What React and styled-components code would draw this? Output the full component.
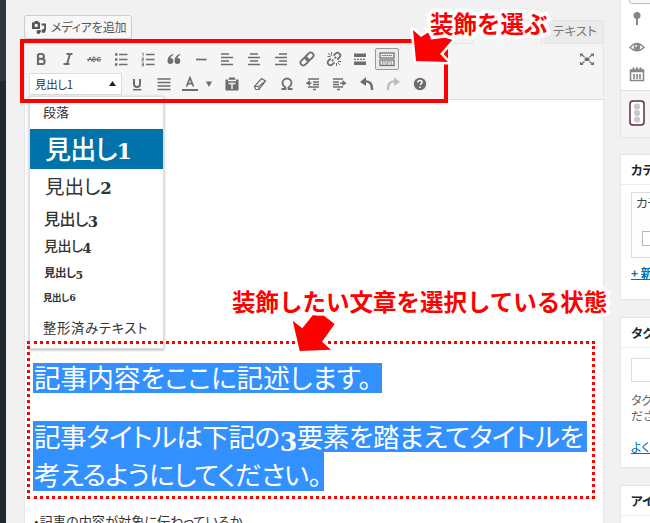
import React from "react";
import styled, { createGlobalStyle, css } from "styled-components";

const Global = createGlobalStyle`
  * { box-sizing: border-box; }
  body { margin: 0; overflow: hidden; }
`;
const jp = `"Noto Sans CJK JP", sans-serif`;

const Page = styled.div`
  position: relative; width: 650px; height: 523px; overflow: hidden;
  display: flex; background: #f1f1f1; color: #444;
  font: 13px/16px ${jp}; white-space: nowrap;
`;
const AdminMenu = styled.div`
  width: 6px; flex: none;
  background: linear-gradient(#32373c 81px, #23282d 81px);
`;
const Main = styled.main`
  width: 580px; margin-left: 18px; flex: none; display: flex; flex-direction: column;
`;
const TabBar = styled.div`
  height: 43px; flex: none; display: flex; align-items: flex-end;
`;
const MediaButton = styled.div`
  width: 108px; height: 24px; margin-bottom: 4px; padding-left: 6px;
  display: flex; align-items: center; gap: 4px;
  border: 1px solid #ccc; border-radius: 3px; background: #f7f7f7;
  box-shadow: 0 1px 0 #d5d5d5; color: #555; font-size: 12px;
  font-feature-settings: "palt"; letter-spacing: -0.15px;
`;
const Tab = styled.div`
  height: ${p => (p.$on ? 24 : 23)}px; width: ${p => p.w}px; margin-left: ${p => p.gap}px; padding: 2px 0 0 7px;
  border: 1px solid #e5e5e5; border-bottom: 0; color: #777; font-size: 12.5px;
  background: ${p => (p.$on ? "#f5f5f5" : "#ebebeb")};
  ${p => p.$on && css`margin-bottom: -1px; z-index: 1;`}
  font-feature-settings: "palt"; letter-spacing: 0.05px;
`;
const Editor = styled.section`
  height: 480px; border: 1px solid #e5e5e5; border-bottom: 0; background: #fff;
`;
const Toolbar = styled.div`
  height: 56px; background: #f5f5f5; border-bottom: 1px solid #ddd;
  padding: 2px 3px 0;
`;
const ToolRow = styled.div`
  display: grid; height: 25px; align-items: center; justify-items: center;
  grid-template-columns: ${p => p.$cols};
`;
const Tool = styled.div`
  width: 24px; height: 22px; display: grid; place-items: center; color: #6d6d6d;
  opacity: ${p => (p.$off ? 0.4 : 1)};
  ${p => p.$on && css`border: 1px solid #999; border-radius: 2px; background: #ebebeb;`}
`;
const Select = styled.div`
  width: 93px; height: 22px; justify-self: start; padding: 0 5px; margin-left: 1px;
  display: flex; align-items: center; justify-content: space-between;
  border: 1px solid #ddd; background: #fff; color: #333; font-size: 11.5px;
  font-feature-settings: "palt"; letter-spacing: -0.3px;
`;
const Content = styled.article`padding: 263px 0 0 8px;`;
const Line = styled.div`
  width: ${p => p.w}px; height: ${p => p.h}px; margin-bottom: ${p => p.gap || 0}px;
  padding-left: 1px; background: #3390ff; color: #fff;
  font-size: 26.6px; line-height: ${p => p.lh}px; font-weight: 400;
  font-feature-settings: "palt"; letter-spacing: ${p => p.ls}px;
`;
const Digit = styled.span`
  font-family: "DejaVu Serif", serif; font-weight: 700; vertical-align: ${p => p.$drop || 0}px;
  font-size: ${p => p.$em || 0.85}em; line-height: 0; letter-spacing: -0.5px;
`;
const Note = styled.p`
  margin: 21px 0 0 0; font-size: 13.2px; line-height: 20px; color: #333;
  font-feature-settings: "palt"; letter-spacing: 0;
`;

const Menu = styled.div`
  position: absolute; left: 29px; top: 96px; width: 135px; height: 253px;
  border: 1px solid #ddd; background: #fff; box-shadow: 0 1px 3px rgba(0,0,0,.3);
`;
const Item = styled.div`
  height: ${p => p.h}px; line-height: ${p => p.h - 2}px; padding-left: ${p => p.pad || 13}px;
  font-size: ${p => p.size}px; font-weight: ${p => p.weight || 400};
  color: ${p => (p.$on ? "#fff" : "#333")}; background: ${p => (p.$on ? "#0073aa" : "#fff")};
  font-feature-settings: "palt"; letter-spacing: ${p => p.ls || 0}px;
`;

const Side = styled.aside`
  width: 30px; margin-left: 16px; flex: none; overflow: hidden;
  font-feature-settings: "palt";
`;
const Box = styled.div`
  height: ${p => p.h}px; width: 280px; margin-bottom: 17px;
  border: 1px solid #e5e5e5; background: #fff; font-size: 12.5px;
`;
const PublishBox = styled(Box)`height: 138px; border-top: 0; margin-bottom: 16px;`;
const Status = styled.div`
  height: 91px; border-bottom: 1px solid #ddd; padding: 0 0 5px 8px; color: #82878c;
  display: grid; grid-template-rows: 5px 28px 28px 25px; align-items: center;
`;
const StubButton = styled.div`
  width: 80px; height: 8px; margin: -5px 0 0 0; border: 1px solid #bbb; border-radius: 3px; background: #f7f7f7;
`;
const Actions = styled.div`height: 46px; background: #f5f5f5; padding: 9px 0 0 8px;`;
const Head = styled.h2`
  margin: 0; height: 30px; padding-left: 10px; border-bottom: 1px solid #eee;
  font-size: 12.5px; line-height: 29px; font-weight: 700; color: #23282d;
`;
const CatPanel = styled.div`
  margin: 7px 0 0 10px; height: 66px; border: 1px solid #ddd; background: #fdfdfd; padding: 2px 0 0 4px;
`;
const Check = styled.div`width: 15px; height: 15px; margin: 20px 0 0 6px; border: 1px solid #b4b9be; background: #fff;`;
const Link = styled.div`
  margin: ${p => p.top}px 0 0 10px; color: #0073aa; text-decoration: underline; font-weight: ${p => p.weight || 400};
  font-size: 12px; line-height: 18px;
`;
const TagInput = styled.div`margin: 10px 0 0 10px; height: 24px; border: 1px solid #ddd;`;
const Hint = styled.div`margin: 10px 0 0 10px; line-height: 16px; color: #666; font-size: 12px;`;

const RedFrame = styled.div`
  position: absolute; z-index: 2; left: 20px; top: 39px; width: 428px; height: 64px; border: 4px solid #f00;
`;
const DottedFrame = styled.div`
  position: absolute; z-index: 2; left: 27px; top: 341px; width: 568px; height: 158px; border: 3px dotted #f00;
`;
const Callout = styled.div`
  position: absolute; z-index: 2; left: ${p => p.x}px; top: ${p => p.y}px;
  color: #f00; font-size: 23.5px; line-height: 28px; font-weight: 700;
  -webkit-text-stroke: 7px #fff; paint-order: stroke fill; stroke-linejoin: round;
`;
const Arrows = styled.svg`position: absolute; z-index: 2; left: 0; top: 0;`;

const Svg = ({ children, size = 16, w, ...p }) => (
  <svg width={w || size} height={size} viewBox={`0 0 ${w || size} ${size}`} fill="none" stroke="currentColor" strokeWidth="1.5" {...p}>
    {children}
  </svg>
);
const Bars = ({ d }) => <Svg><path d={d} strokeWidth="1.7" /></Svg>;
const icons = {
  bold: <Svg><path d="M5 3v10h4a2.6 2.6 0 000-5.2H5M5 3h3.5a2.4 2.4 0 010 4.8" strokeWidth="2.2" /></Svg>,
  italic: <Svg><path d="M6.500 3h6M3.500 13h6M10 3L7 13" strokeWidth="2" /></Svg>,
  strike: <Svg><path d="M2 10.500L4 6l2 4.500M7 6h1.500q1.500 1 0 2.200q2 1 0 2.300H7zM14.500 6.500q-3.500-1-3.500 1.800t3.500 1.700" strokeWidth="1" /><path d="M1 8.500h14" strokeWidth="1.200" /></Svg>,
  ul: <Svg><path d="M6 3.500h8.500M6 8.500h8.500M6 13.500h8.500" strokeWidth="1.300" /><path d="M2 3.500h2.400M2 8.500h2.400M2 13.500h2.400" strokeWidth="2.400" /></Svg>,
  ol: <Svg><path d="M6 3.500h8.500M6 8.500h8.500M6 13.500h8.500" strokeWidth="1.300" /><path d="M2 2h1.200v3.500M1.500 7h2v1.500h-1.500v1.500h2M1.500 12h2v3h-2m0-1.500h2" strokeWidth=".8" /></Svg>,
  quote: <Svg><g fill="currentColor" stroke="none"><path d="M7 3C3.500 4 1.500 6.500 1.500 10a2.900 2.900 0 102.900-2.900C4.700 5.700 6 4.700 7.400 4zM14 3C10.500 4 8.500 6.500 8.500 10a2.900 2.900 0 102.900-2.900c.3-1.400 1.600-2.400 3-3.100z" /></g></Svg>,
  hr: <Svg><path d="M3 8.500h10.500" strokeWidth="1.700" /></Svg>,
  left: <Bars d="M2 3h8M2 6.500h12M2 10h8M2 13.500h12" />,
  center: <Bars d="M4 3h8M2 6.500h12M4 10h8M2 13.500h12" />,
  right: <Bars d="M6 3h8M2 6.500h12M6 10h8M2 13.500h12" />,
  justify: <Bars d="M1.500 3h13M1.500 6.500h13M1.500 10h13M1.500 13.500h13" />,
  link: <Svg><g transform="rotate(-45 8 8)" strokeWidth="1.800"><rect x="0" y="5.200" width="9" height="5.600" rx="2.800" /><rect x="7" y="5.200" width="9" height="5.600" rx="2.800" /></g></Svg>,
  unlink: <Svg><g transform="rotate(-45 8 8)" strokeWidth="1.800"><path d="M6 5.300H3a2.700 2.700 0 000 5.400h3M10 5.300h3a2.700 2.700 0 010 5.400h-3M5 8h2M9 8h2" /></g><path d="M5.500 1v3.500M1.500 5.500h3M10.500 12v3M12 10.500h3M2 2l2.500 2.500M11.500 11.500l2.500 2.500" strokeWidth="1" /></Svg>,
  more: <Svg><path d="M2 4.300h12M2 12.300h12" strokeWidth="3.600" /><path d="M2 8.300h12" strokeDasharray="2 1" strokeWidth="1.300" /></Svg>,
  sink: <Svg><rect x="1" y="2" width="14" height="5" strokeWidth="1.200" /><rect x="1" y="9" width="14" height="5.500" strokeWidth="1.200" /><path d="M3 4.500h10M3 11h10M3 13h1.500M6 13h4M11.500 13h1.500" strokeDasharray="1.500 .7" strokeWidth="1.200" /></Svg>,
  full: <Svg><rect x="5.700" y="6.500" width="4.600" height="3.500" fill="currentColor" stroke="none" /><path d="M2.500 3.500l3 2.500M13.500 3.500l-3 2.500M2.500 13l3-2.500M13.500 13l-3-2.500" strokeWidth="1.200" /><path d="M1 6V2.500h3.500zM15 6V2.500h-3.500zM1 10.500V14h3.500zM15 10.500V14h-3.500z" fill="currentColor" stroke="none" /></Svg>,
  underline: <Svg><path d="M5 3v5q0 3 3 3t3-3V3" strokeWidth="2" /><path d="M4 13.700h8.500" strokeWidth="1.500" /></Svg>,
  color: <Svg w={18}><path d="M5.500 10.500L9 1.800l3.500 8.700M6.500 7.700h5" strokeWidth="1.700" /><path d="M1 14h16" strokeWidth="2" /></Svg>,
  caret: <Svg size={8}><path d="M1 1.500h6L4 7z" fill="currentColor" stroke="none" /></Svg>,
  paste: <Svg><path d="M1.500 3.500H5V1.500h6v2h3.500v11h-13z" fill="currentColor" stroke="none" /><path d="M4 4.500h8M4.500 7.500h7M8 7.500v5.500" stroke="#f5f5f5" strokeWidth="1.500" /></Svg>,
  eraser: <Svg><path d="M2.500 10.500L9.500 2.500l4 2.500-6.500 8.500H3.800zM2.500 10.500h4.300l.2 3M6.800 10.500L13.500 5" strokeWidth="1.200" /></Svg>,
  omega: <Svg><path d="M2.500 13h4v-1.500Q3.500 9.500 3.500 7a4.500 4.500 0 019 0q0 2.500-3 4.500V13h4" strokeWidth="1.800" /></Svg>,
  outdent: <Svg><path d="M3 3h11M8 6h6M8 8.500h6M3 11h11M8 13.500h3" strokeWidth="1.500" /><path d="M1.500 7.200h5" /><path d="M5 4L1 7.200 5 10z" fill="currentColor" stroke="none" /></Svg>,
  indent: <Svg><path d="M1 3h10M1 6h6M1 8.500h6M1 11h10M5 13.500h3" strokeWidth="1.500" /><path d="M8 7.200h4" /><path d="M10.500 4l4 3.200-4 2.800z" fill="currentColor" stroke="none" /></Svg>,
  undo: <Svg><path d="M5 5.500c5-1 8.500 2 8 8.500" strokeWidth="2.300" /><path d="M1 6l6-5v9z" fill="currentColor" stroke="none" /></Svg>,
  redo: <Svg><path d="M11 5.500C6 4.500 2.500 7.500 3 14" strokeWidth="2.300" /><path d="M15 6L9 1v9z" fill="currentColor" stroke="none" /></Svg>,
  help: <Svg><circle cx="8" cy="8" r="6.200" fill="currentColor" stroke="none" /><path d="M5.900 6.500q0-2 2.100-2t2.100 1.800Q10.100 7.500 8 8.700M8 10.500v1.500" stroke="#fff" strokeWidth="1.500" /></Svg>,
};
const first = ["bold", "italic", "strike", "ul", "ol", "quote", "hr", "left", "center", "right", "link", "unlink", "more", "sink"];
const second = ["paste", "eraser", "omega", "outdent", "indent", "undo", "redo", "help"];

export default function App() {
  return (
    <Page>
      <Global />
      <AdminMenu />
      <Main>
        <TabBar>
          <MediaButton>
            <Svg>
              <path d="M1 3.500h2L4 2h3l1 1.500h1V10H1z" fill="currentColor" stroke="none" />
              <circle cx="5.200" cy="6.500" r="1.700" fill="#f7f7f7" stroke="none" />
              <path d="M10.500 5.500h3.500v6" strokeWidth="1.800" /><circle cx="12.500" cy="12" r="2" fill="currentColor" stroke="none" /><circle cx="7.500" cy="13" r="2" fill="currentColor" stroke="none" /><path d="M9 13V11" />
            </Svg>
            メディアを追加
          </MediaButton>
          <Tab w={69} gap={341} $on />
          <Tab w={59} gap={3}>テキスト</Tab>
        </TabBar>
        <Editor>
          <Toolbar>
            <ToolRow $cols="repeat(14, 26.6px) 1fr 26px">
              {first.map(n => <Tool key={n} $on={n === "sink"}>{icons[n]}</Tool>)}
              <span />
              <Tool>{icons.full}</Tool>
            </ToolRow>
            <ToolRow $cols="95px 27px 27px 25px 14px 31px repeat(7, 26.6px)">
              <Select>見出し1<Svg size={7}><path d="M0 6h7L3.500 1z" fill="#222" stroke="none" /></Svg></Select>
              <Tool>{icons.underline}</Tool>
              <Tool>{icons.justify}</Tool>
              <Tool>{icons.color}</Tool>
              <Tool>{icons.caret}</Tool>
              {second.map(n => <Tool key={n} $off={n === "redo"}>{icons[n]}</Tool>)}
            </ToolRow>
          </Toolbar>
          <Content>
            <Line w={349} h={30} lh={28} gap={28} ls={0}>記事内容をここに記述します。</Line>
            <Line w={554} h={31} lh={30} ls={-0.5}>記事タイトルは下記の<Digit $em={0.95} $drop={-4}>3</Digit>要素を踏まえてタイトルを</Line>
            <Line w={291} h={39} lh={43} ls={-0.8}>考えるようにしてください。</Line>
            <Note>・記事の内容が対象に伝わっているか</Note>
          </Content>
        </Editor>
      </Main>
      <Side>
        <PublishBox>
          <Status>
            <StubButton />
            <Svg><circle cx="8" cy="4.500" r="3.500" fill="currentColor" stroke="none" /><path d="M8 7v7" strokeWidth="2" /></Svg>
            <Svg><path d="M1 8.500Q8 .5 15 8.500 8 15 1 8.500z" /><circle cx="8" cy="8" r="3.200" fill="currentColor" stroke="none" /><circle cx="7" cy="7" r="1" fill="#fff" stroke="none" /></Svg>
            <Svg><path d="M1.500 4h13v10.500h-13zM2 5.500h12" /><path d="M4.500 1.500v3M8 1.500v3M11.500 1.500v3" strokeWidth="2" /><path d="M5 8v5M8 8v5M11 8v5" strokeWidth="1.600" /></Svg>
          </Status>
          <Actions>
            <Svg w={16} size={26}><rect x="1" y="1" width="14" height="24" rx="3" stroke="#5d2a4a" fill="#fff" /><g fill="#c8c8c8" stroke="none"><circle cx="8" cy="6.500" r="3.100" /><circle cx="8" cy="13" r="3.100" /><circle cx="8" cy="19.500" r="3.100" /></g></Svg>
          </Actions>
        </PublishBox>
        <Box h={146}>
          <Head>カテゴリー</Head>
          <CatPanel>カテゴリー一覧<Check /></CatPanel>
          <Link top={6} weight={700}>+ 新規カテゴリーを追加</Link>
        </Box>
        <Box h={151}>
          <Head>タグ</Head>
          <TagInput />
          <Hint>タグが複数ある場合<br />ださい</Hint>
          <Link top={14}>よく使われているタグから選択</Link>
        </Box>
        <Box h={80}><Head>アイキャッチ画像</Head></Box>
      </Side>

      <Menu>
        <Item h={32} size={13}>段落</Item>
        <Item h={40} size={26} pad={15} weight={500} ls={-0.8} $on>見出し<Digit>1</Digit></Item>
        <Item h={36} size={19.5} pad={15} ls={-0.1}>見出し<Digit>2</Digit></Item>
        <Item h={28} size={16} pad={14} weight={500} ls={-0.6}>見出し<Digit $em={0.92} $drop={-2}>3</Digit></Item>
        <Item h={27} size={14} pad={14} weight={500} ls={-0.5}>見出し<Digit $em={0.95} $drop={-2}>4</Digit></Item>
        <Item h={26} size={11.5} pad={14} weight={700} ls={-0.5}>見出し<Digit $em={0.95} $drop={-1.5}>5</Digit></Item>
        <Item h={25} size={9.5} weight={700} ls={-0.4}>見出し<Digit $em={1}>6</Digit></Item>
        <Item h={35} size={13.3} ls={0.75}>整形済みテキスト</Item>
      </Menu>

      <RedFrame />
      <DottedFrame />
      <Arrows width="650" height="523">
        <g fill="#f00" stroke="#fff" strokeWidth="5" strokeLinejoin="round" paintOrder="stroke">
          <path d="M413 30L421 37 432 30 454 38 440 54 448 62 416 61z" />
          <path d="M292.700 320.700L302.300 328.300 312.700 315.300H323.300L334.700 324 322 341.700 331 349.700 299.700 351z" />
        </g>
      </Arrows>
      <Callout x={430} y={9}>装飾を選ぶ</Callout>
      <Callout x={232} y={287}>装飾したい文章を選択している状態</Callout>
    </Page>
  );
}
